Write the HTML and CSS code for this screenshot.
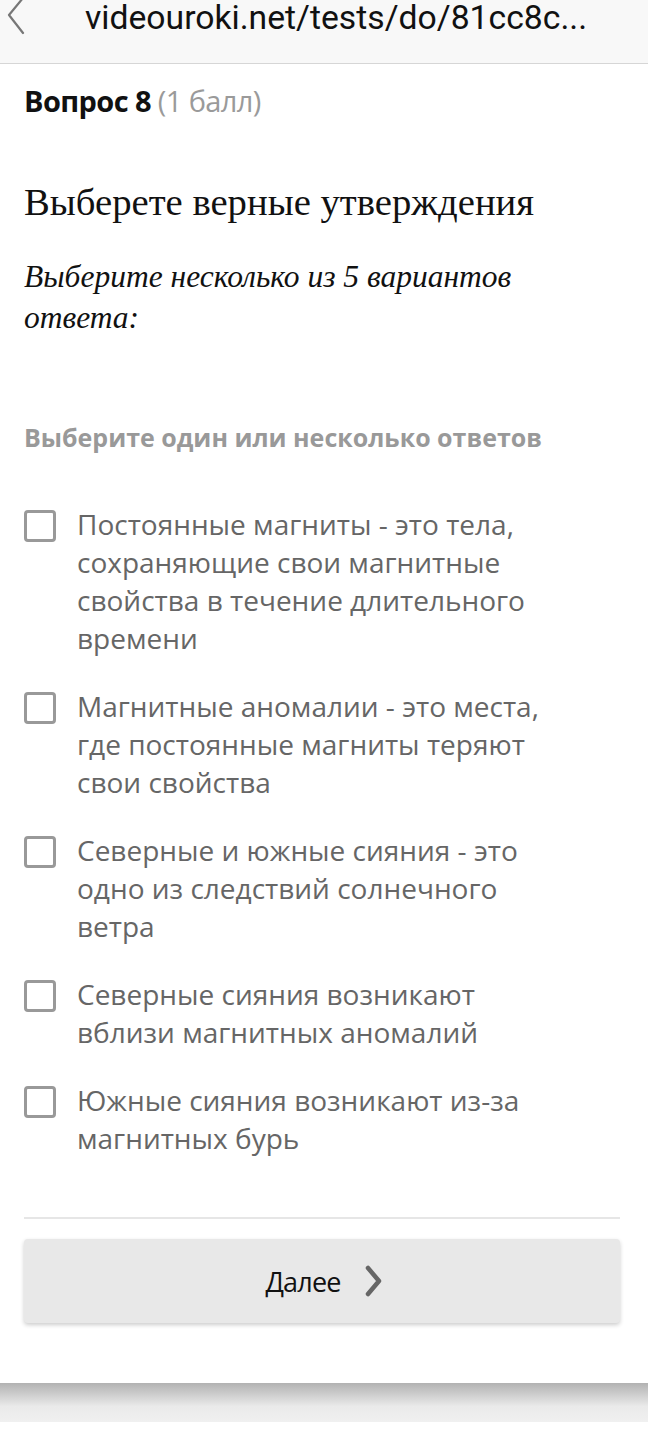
FILE: index.html
```html
<!DOCTYPE html>
<html lang="ru">
<head>
    <meta charset="UTF-8">
    <meta name="viewport" content="width=device-width, initial-scale=1.0">
    <title>Тест — Вопрос 8</title>
    <link rel="stylesheet" href="styles.css">
</head>
<body>
    <div class="address-bar">
        <svg class="back" width="22" height="36" viewBox="0 0 22 36">
            <path d="M19 -2 L5 15 L19 33" fill="none" stroke="#777" stroke-width="2.2" stroke-linecap="round" stroke-linejoin="round"/>
        </svg>
        <div class="url">videouroki.net/tests/do/81cc8c...</div>
    </div>

    <div class="page">
        <div class="question-num">
            <b>Вопрос 8</b> <span class="points">(1 балл)</span>
        </div>

        <h1 class="question-title">Выберете верные утверждения</h1>
        <p class="question-hint">Выберите несколько из 5 вариантов ответа:</p>

        <div class="answers-label">Выберите один или несколько ответов</div>

        <ul class="answers">
            <li class="answer">
                <span class="checkbox"></span>
                <span class="answer-text">Постоянные магниты - это тела, сохраняющие свои магнитные свойства в течение длительного времени</span>
            </li>
            <li class="answer">
                <span class="checkbox"></span>
                <span class="answer-text">Магнитные аномалии - это места, где постоянные магниты теряют свои свойства</span>
            </li>
            <li class="answer">
                <span class="checkbox"></span>
                <span class="answer-text">Северные и южные сияния - это одно из следствий солнечного ветра</span>
            </li>
            <li class="answer">
                <span class="checkbox"></span>
                <span class="answer-text">Северные сияния возникают вблизи магнитных аномалий</span>
            </li>
            <li class="answer">
                <span class="checkbox"></span>
                <span class="answer-text">Южные сияния возникают из-за магнитных бурь</span>
            </li>
        </ul>

        <div class="footer">
            <button class="next-btn">
                Далее
                <svg width="22" height="32" viewBox="0 0 22 32">
                    <path d="M5 3 L16 16 L5 29" fill="none" stroke="#666" stroke-width="4.5" stroke-linecap="round" stroke-linejoin="round"/>
                </svg>
            </button>
        </div>
    </div>

    <div class="page-bottom"></div>
</body>
</html>
```

FILE: styles.css
```css
* {
    margin: 0;
    padding: 0;
    box-sizing: border-box;
}

body {
    width: 648px;
    background: #fff;
    font-family: 'Open Sans', 'Noto Sans', sans-serif;
    color: #333;
}

.address-bar {
    height: 64px;
    background: #f8f8f8;
    border-bottom: 1px solid #d6d6d6;
    display: flex;
    align-items: flex-start;
}

.address-bar .back {
    margin-left: 4px;
    flex-shrink: 0;
}

.url {
    margin-left: 59px;
    margin-top: 1px;
    font-family: Roboto, sans-serif;
    font-size: 33.7px;
    line-height: 34px;
    color: #111;
    white-space: nowrap;
}

.page {
    padding: 19px 28px 60px 24px;
    background: #fff;
}

.question-num {
    font-family: 'Open Sans', sans-serif;
    font-size: 29px;
    line-height: 36px;
    letter-spacing: -0.6px;
}

.question-num b {
    font-weight: 700;
    color: #111;
}

.question-num .points {
    color: #9a9a9a;
}

.question-title {
    margin-top: 61px;
    font-family: 'Liberation Serif', serif;
    font-weight: 400;
    font-size: 38.7px;
    line-height: 44px;
    color: #111;
}

.question-hint {
    margin-top: 32px;
    font-family: 'Liberation Serif', serif;
    font-style: italic;
    font-size: 31.5px;
    line-height: 41px;
    color: #111;
    width: 520px;
}

.answers-label {
    margin-top: 84px;
    font-size: 25px;
    font-weight: 700;
    color: #999;
    line-height: 30px;
}

.answers {
    list-style: none;
    margin-top: 53px;
    display: flex;
    flex-direction: column;
    gap: 30px;
}

.answer {
    display: flex;
    align-items: flex-start;
    gap: 21px;
}

.checkbox {
    flex-shrink: 0;
    width: 32px;
    height: 32px;
    margin-top: 5px;
    border: 3px solid #999;
    border-radius: 4px;
}

.answer-text {
    max-width: 480px;
    font-size: 28px;
    line-height: 38px;
    color: #666;
}

.footer {
    margin-top: 60px;
    padding-top: 20px;
    border-top: 2px solid #e6e6e6;
}

.next-btn {
    width: 100%;
    height: 84px;
    border: none;
    border-radius: 4px;
    background: #e8e8e8;
    box-shadow: 0 2px 4px rgba(0, 0, 0, 0.2);
    display: flex;
    align-items: center;
    justify-content: center;
    gap: 22px;
    font-family: 'Open Sans', sans-serif;
    font-size: 27px;
    letter-spacing: -0.8px;
    color: #111;
}

.next-btn svg {
    margin-right: -6px;
}

.page-bottom {
    height: 39px;
    background: linear-gradient(#b2b2b2, #eaeaea 60%, #f0f0f0);
}
```
